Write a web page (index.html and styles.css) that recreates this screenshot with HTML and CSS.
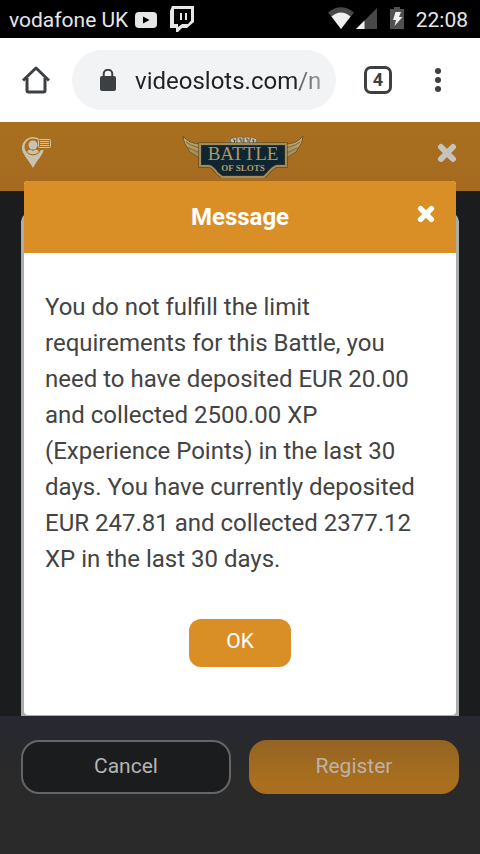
FILE: index.html
```html
<!DOCTYPE html>
<html lang="en">
<head>
  <meta charset="UTF-8">
  <title>Battle of Slots</title>
  <meta name="viewport" content="width=device-width, initial-scale=1.0">
  <link rel="stylesheet" href="styles.css">
</head>
<body>

  <div class="status-bar">
    <span>vodafone UK</span>
    <svg width="22" height="16" viewBox="0 0 22 16">
      <rect width="22" height="16" rx="4" fill="#e6e6e6"/>
      <path d="M8 4.500l6.500 3.500L8 11.500z" fill="#000"/>
    </svg>
    <svg class="twitch" width="24" height="26" viewBox="0 0 24 26">
      <path d="M2 0H24V16L17 22H12L8 26H6V22H0V5z" fill="#e6e6e6"/>
      <path d="M4 3H21V14.500L18 18H12L8 21V18H4z" fill="#000"/>
      <path d="M10 7h2v7h-2zM15 7h2v7h-2z" fill="#e6e6e6"/>
    </svg>
    <div class="status-right">
      <svg width="78" height="24" viewBox="0 0 78 24">
        <path d="M0 6.500Q13 -4 26 6.500L13 23z" fill="#484848"/>
        <path d="M3.500 10.500Q13 2.500 22.500 10.500L13 23z" fill="#f0f0f0"/>
        <path d="M49 2V23H28z" fill="#484848"/>
        <path d="M36.500 14.500V23H28z" fill="#f0f0f0"/>
        <path d="M62 3h4V1h6v2h4v20H62z" fill="#505050"/>
        <path d="M67.500 6h5.500l-2 5h3.500L66.500 20l1.500-6h-3z" fill="#f0f0f0"/>
      </svg>
      <span>22:08</span>
    </div>
  </div>

  <div class="browser-bar">
    <button class="icon-btn" aria-label="Home">
      <svg width="28" height="28" viewBox="0 0 28 28" fill="none" stroke="#3c4043" stroke-width="3" stroke-linejoin="round">
        <path d="M1 14.500L14 2L27 14.500"/>
        <path d="M5 12V24.500Q5 26 6.500 26H21.500Q23 26 23 24.500V12"/>
      </svg>
    </button>
    <div class="address">
      <svg width="16" height="22" viewBox="0 0 16 22">
        <rect y="7" width="16" height="15" rx="2" fill="#3c4043"/>
        <path d="M3.700 8V5a4.300 4.300 0 0 1 8.600 0V8" fill="none" stroke="#3c4043" stroke-width="2"/>
      </svg>
      <input type="text" class="url" aria-label="Address" value="videoslots.com/n">
    </div>
    <button class="tabs" aria-label="Open tabs">4</button>
    <button class="icon-btn" aria-label="Menu">
      <svg width="6" height="26" viewBox="0 0 6 26" fill="#3c4043">
        <circle cx="3" cy="4" r="3"/><circle cx="3" cy="13" r="3"/><circle cx="3" cy="22" r="3"/>
      </svg>
    </button>
  </div>

  <main class="page">
    <header class="top">
      <button class="icon-btn" aria-label="Profile">
        <svg width="30" height="34" viewBox="0 0 30 34">
          <path d="M11 1C5 1 0 6 0 12C0 18 6 23 11 32C15 24 21 19 21.500 14H17L11 18L5 14L4 7L11 3L16 4L17 2.500Q14 1 11 1z" fill="#c8c2b2"/>
          <circle cx="11" cy="11" r="8.500" fill="#a9701f"/>
          <circle cx="11" cy="9" r="4.500" fill="#c8c2b2"/>
          <path d="M5 16Q6 13.500 8.500 13.500L11 15L13.500 13.500Q16 13.500 17 16Q11 20.500 5 16z" fill="#c8c2b2"/>
          <rect x="16.500" y="3.500" width="12" height="8" rx="1" fill="#a9701f" stroke="#c8c2b2"/>
          <path d="M18 5.500h9M18 7.500h9M18 9.500h9" stroke="#c8c2b2"/>
        </svg>
      </button>
      <svg class="logo" width="126" height="50" viewBox="0 -7 126 50">
        <defs>
          <linearGradient id="gold" x1="0" y1="0" x2="0" y2="1">
            <stop offset="0" stop-color="#c9ae72"/><stop offset="1" stop-color="#94804f"/>
          </linearGradient>
        </defs>
        <path d="M1 1Q7 9 19 9L25 12V26Q15 23 11 19Q6 17 6 13Q2 10 1 1z" fill="url(#gold)" stroke="#70572c"/>
        <path d="M121 1Q115 9 103 9L97 12V26Q107 23 111 19Q116 17 116 13Q120 10 121 1z" fill="url(#gold)" stroke="#70572c"/>
        <path d="M4 7Q12 13 23 13M7 13Q14 18 23 18M118 7Q110 13 99 13M115 13Q108 18 99 18" fill="none" stroke="#80683a"/>
        <path d="M35 10Q61 -3 87 10z" fill="#94804f"/>
        <g fill="#c8c1ac" stroke="#806b43">
          <path d="M48 4l6-2 2 7-6 1z"/><path d="M55 2h6v7h-6z"/><path d="M62 2h6v7h-6z"/><path d="M69 2l6 2-2 6-6-1z"/>
        </g>
        <path d="M51 5h2l-1 3M57 4h2v3M64 4h2v3M70 5h2l-1 3" fill="none" stroke="#40453b"/>
        <path d="M18 9H104V31H95Q91 32 86 38L82 42H40L35 38Q31 32 27 31H18z" fill="#102532" stroke="#4a3b20" stroke-width="3"/>
        <path d="M18 9H104V31H95Q91 32 86 38L82 42H40L35 38Q31 32 27 31H18z" fill="none" stroke="#a18b58" stroke-width="2"/>
        <text class="logo-title" x="61" y="25" text-anchor="middle">BATTLE</text>
        <text class="logo-sub" x="61" y="36" text-anchor="middle">OF SLOTS</text>
      </svg>
      <button class="icon-btn" aria-label="Close battle">
        <svg width="20" height="20" viewBox="0 0 20 20">
          <path d="M4 4L16 16M16 4L4 16" stroke="#c5c3c0" stroke-width="6" stroke-linecap="round"/>
        </svg>
      </button>
    </header>

    <div class="content">
      <div class="card"></div>
    </div>

    <footer class="actions">
      <button class="btn cancel">Cancel</button>
      <button class="btn register">Register</button>
    </footer>

    <div class="modal" role="dialog" aria-labelledby="modalTitle">
      <div class="modal-head">
        <h2 id="modalTitle">Message</h2>
        <button class="icon-btn modal-close" aria-label="Close">
          <svg width="18" height="18" viewBox="0 0 20 20">
            <path d="M4 4L16 16M16 4L4 16" stroke="#fff" stroke-width="6" stroke-linecap="round"/>
          </svg>
        </button>
      </div>
      <div class="modal-body">
        <p>You do not fulfill the limit requirements for this Battle, you need to have deposited EUR 20.00 and collected 2500.00 XP (Experience Points) in the last 30 days. You have currently deposited EUR 247.81 and collected 2377.12 XP in the last 30 days.</p>
        <button class="ok">OK</button>
      </div>
    </div>
  </main>

</body>
</html>
```
FILE: styles.css
```css
* {
  box-sizing: border-box;
  margin: 0;
  padding: 0;
}

body {
  background: #1b1c1e;
  font-family: Roboto, sans-serif;
  min-height: 100vh;
  display: flex;
  flex-direction: column;
}

button {
  border: none;
  background: none;
  font-family: inherit;
  cursor: pointer;
}

svg {
  display: block;
  flex-shrink: 0;
}

/* phone status bar */
.status-bar {
  background: #000;
  color: #e6e6e6;
  height: 38px;
  padding: 2px 12px 0 9px;
  display: flex;
  align-items: center;
  gap: 7px;
  font-size: 21px;
}

.twitch {
  margin-left: 6px;
  margin-bottom: 2px;
}

.status-right {
  display: flex;
  align-items: center;
  gap: 10px;
  margin-left: auto;
}

.status-right svg {
  margin-bottom: 4px;
}

/* browser toolbar */
.browser-bar {
  background: #fff;
  height: 84px;
  padding: 0 39px 0 22px;
  display: flex;
  align-items: center;
}

.address {
  flex: 1;
  min-width: 0;
  height: 60px;
  margin: 0 28px 0 22px;
  padding: 0 14px 0 28px;
  border-radius: 30px;
  background: #f1f3f4;
  display: flex;
  align-items: center;
  gap: 19px;
}

.url {
  flex: 1;
  min-width: 0;
  border: none;
  outline: none;
  font-family: inherit;
  font-size: 24px;
  line-height: 36px;
  padding-top: 2px;
  color: transparent;
  background: linear-gradient(to right, #202124 164px, #5f6368 165px, #a0a3a6 190px);
  -webkit-background-clip: text;
  background-clip: text;
}

.tabs {
  width: 28px;
  height: 28px;
  margin-right: 43px;
  border: 3px solid #3c4043;
  border-radius: 7px;
  color: #3c4043;
  font-size: 18px;
  font-weight: bold;
  line-height: 22px;
}

/* battle page */
.page {
  flex: 1;
  position: relative;
  display: flex;
  flex-direction: column;
}

.top {
  background: linear-gradient(#a9701f, #a56a20);
  height: 69px;
  padding: 0 23px 8px 22px;
  display: flex;
  align-items: center;
  justify-content: space-between;
}

.logo-title {
  font-family: "Liberation Serif", serif;
  font-size: 19px;
  fill: #ad9763;
}

.logo-sub {
  font-family: "Liberation Serif", serif;
  font-size: 9px;
  font-weight: bold;
  fill: #b29d6b;
}

.content {
  flex: 1;
  padding: 20px 21px 0;
  display: flex;
}

.card {
  flex: 1;
  background: #aaadae;
  border-radius: 12px 12px 0 0;
}

.actions {
  background: linear-gradient(#272831, #2a2a2a 40%);
  padding: 24px 21px 60px;
  display: grid;
  grid-template-columns: 1fr 1fr;
  gap: 18px;
}

.btn {
  height: 54px;
  border-radius: 18px;
  font-size: 21px;
  padding-bottom: 2px;
}

.cancel {
  background: #1b1c1d;
  border: 2px solid #646567;
  color: #b4b4b4;
}

.register {
  background: linear-gradient(#936323, #a96f1e 75%);
  color: #bcb3a6;
}

/* message popup */
.modal {
  position: absolute;
  top: 59px;
  left: 24px;
  right: 24px;
  background: #fff;
  border-radius: 4px;
  overflow: hidden;
}

.modal-head {
  position: relative;
  background: #da8f26;
  color: #fff;
  height: 72px;
  display: flex;
  align-items: center;
  justify-content: center;
}

.modal-head h2 {
  font-size: 24px;
}

.modal-close {
  position: absolute;
  top: 24px;
  right: 21px;
}

.modal-body {
  padding: 36px 21px 48px;
}

.modal-body p {
  color: #434343;
  font-size: 24px;
  line-height: 36px;
}

.ok {
  display: block;
  width: 102px;
  height: 48px;
  margin: 42px auto 0;
  padding-bottom: 4px;
  border-radius: 12px;
  background: #da8f26;
  color: #fff;
  font-size: 21px;
}
```
